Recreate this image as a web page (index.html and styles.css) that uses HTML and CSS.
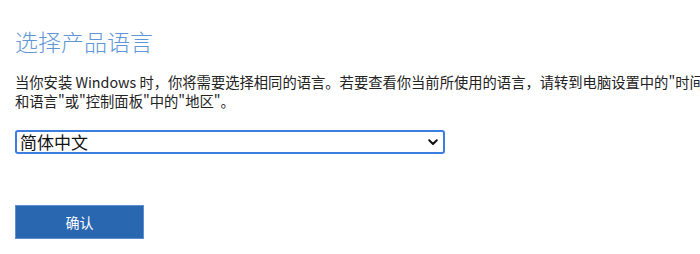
FILE: index.html
```html
<!DOCTYPE html>
<html lang="zh-CN">
<head>
<meta charset="utf-8">
<link rel="stylesheet" href="styles.css">
</head>
<body>
<main class="page">
  <h2 class="title">选择产品语言</h2>
  <p class="desc">当你安装 Windows 时，你将需要选择相同的语言。若要查看你当前所使用的语言，请转到电脑设置中的"时间和语言"或"控制面板"中的"地区"。</p>
  <div class="select">
    <span class="select-value">简体中文</span>
    <svg class="chevron" width="10" height="7" viewBox="0 0 10 7"><path d="M1.2 1.3 L5 5 L8.8 1.3" fill="none" stroke="#111" stroke-width="2" stroke-linecap="round" stroke-linejoin="round"/></svg>
  </div>
  <button class="confirm">确认</button>
</main>
</body>
</html>
```
FILE: styles.css
```css
html, body {
  margin: 0;
  padding: 0;
  background: #fff;
  overflow: hidden;
}
.page {
  width: 702px;
  padding: 26px 15px 0 15px;
  font-family: "Noto Sans CJK SC", "Noto Sans", sans-serif;
  color: #222;
}
.title {
  margin: 0;
  font-size: 23px;
  font-weight: 300;
  line-height: 30px;
  color: #5f97d6;
}
.desc {
  margin: 16px 0 0 0;
  font-size: 14.3px;
  line-height: 19px;
  color: #222;
}
.select {
  margin-top: 20px;
  width: 430px;
  height: 24px;
  box-sizing: border-box;
  border: 2px solid #3b7de0;
  border-radius: 3px;
  display: flex;
  align-items: center;
  justify-content: space-between;
  padding: 0 5px 0 3px;
}
.select-value {
  font-size: 17px;
  line-height: 20px;
  color: #111;
}
.confirm {
  display: block;
  margin-top: 51px;
  width: 129px;
  height: 34px;
  border: 1px solid #5e8fd0;
  background: #2a67b1;
  color: #fff;
  font-family: "Noto Sans CJK SC", sans-serif;
  font-size: 14px;
  padding: 0;
}
```
